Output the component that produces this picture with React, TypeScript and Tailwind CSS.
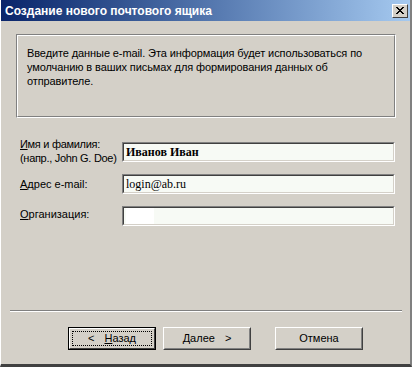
import React from "react";

const ui = { fontFamily: '"Liberation Sans", Arial, sans-serif' };
const serif = { fontFamily: '"Liberation Serif", "Times New Roman", serif' };

function Field({ children }: { children?: React.ReactNode }) {
  return (
    <div className="h-[20px] w-[273px] border border-t-[#808080] border-l-[#808080] border-b-white border-r-white">
      <div className="h-full w-full border border-t-[#404040] border-l-[#404040] border-b-[#d4d0c8] border-r-[#d4d0c8] bg-[#f7faf5] flex items-center pl-[2px] text-[12px] text-black leading-none" style={serif}>
        {children}
      </div>
    </div>
  );
}

function Btn({ children, def }: { children: React.ReactNode; def?: boolean }) {
  if (def) {
    return (
      <div className="h-[23px] w-[88px] border border-black">
        <div className="h-full w-full border border-t-white border-l-white border-b-[#404040] border-r-[#404040] bg-[#d4d0c8] p-[2px]">
          <div className="h-full w-full border border-dotted border-black flex items-center justify-center text-[11px] text-black" style={ui}>
            {children}
          </div>
        </div>
      </div>
    );
  }
  return (
    <div className="h-[23px] w-[88px] border border-t-white border-l-white border-b-[#404040] border-r-[#404040]">
      <div className="h-full w-full border border-t-[#d4d0c8] border-l-[#d4d0c8] border-b-[#808080] border-r-[#808080] bg-[#d4d0c8] flex items-center justify-center text-[11px] text-black" style={ui}>
        {children}
      </div>
    </div>
  );
}

export default function App() {
  return (
    <div className="w-[412px] h-[367px] bg-[#d4d0c8] flex flex-col overflow-hidden border-l border-l-white border-b-[3px] border-b-[#404040] border-r-2 border-r-[#808080]" style={ui}>
      <div className="h-[21px] shrink-0 flex items-center justify-between pl-[4px] pr-[2px] bg-gradient-to-r from-[#0a246a] to-[#a6caf0]">
        <span className="text-white font-bold text-[12px] leading-none">Создание нового почтового ящика</span>
        <div className="w-[16px] h-[14px] border border-t-white border-l-white border-b-[#404040] border-r-[#404040] bg-[#d4d0c8] flex items-center justify-center">
          <svg width="8" height="7" viewBox="0 0 8 7">
            <path d="M0 0 L7 7 M1 0 L8 7 M7 0 L0 7 M8 0 L1 7" stroke="black" strokeWidth="1" />
          </svg>
        </div>
      </div>

      <div className="mt-[13px] ml-[15px] w-[380px] h-[84px] shrink-0 border border-[#808080] border-r-white border-b-white">
        <div className="h-full w-full border border-white border-r-[#808080] border-b-[#808080] pl-[9px] pt-[10px] text-[11px] leading-[14px] text-black tracking-[-0.1px]">
          Введите данные e-mail. Эта информация будет использоваться по
          <br />
          умолчанию в ваших письмах для формирования данных об
          <br />
          отправителе.
        </div>
      </div>

      <div className="mt-[24px] ml-[19px] flex flex-col gap-[12px] text-[11px] text-black shrink-0">
        <div className="flex items-center h-[20px]">
          <div className="w-[102px] leading-[14px] -mt-[2px] whitespace-nowrap tracking-[-0.3px]">
            <u>И</u>мя и фамилия:
            <br />
            (напр., John G. Doe)
          </div>
          <Field>
            <span className="font-bold">Иванов Иван</span>
          </Field>
        </div>
        <div className="flex items-center h-[20px]">
          <div className="w-[102px] leading-[14px] whitespace-nowrap">
            <u>А</u>дрес e-mail:
          </div>
          <Field>login@ab.ru</Field>
        </div>
        <div className="flex items-center h-[20px]">
          <div className="w-[102px] leading-[14px] -mt-[4px] whitespace-nowrap">
            <u>О</u>рганизация:
          </div>
          <Field>
            <span className="block w-[28px] h-[16px] bg-white" />
          </Field>
        </div>
      </div>

      <div className="mt-[84px] ml-[9px] w-[392px] shrink-0 border-t border-t-[#808080] border-b border-b-white" />

      <div className="mt-[15px] ml-[67px] flex shrink-0">
        <Btn def>
          <span className="mr-[10px]">&lt;</span>
          <span>
            <u>Н</u>азад
          </span>
        </Btn>
        <div className="ml-[7px]">
          <Btn>
            <span>
              <u>Д</u>алее
            </span>
            <span className="ml-[10px]">&gt;</span>
          </Btn>
        </div>
        <div className="ml-[24px]">
          <Btn>Отмена</Btn>
        </div>
      </div>
    </div>
  );
}
